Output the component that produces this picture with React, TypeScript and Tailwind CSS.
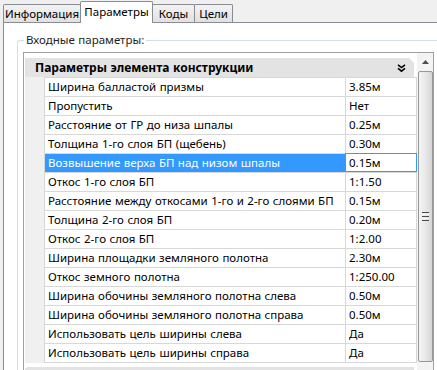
import React from "react";

const ROWS: [string, string][] = [
  ["Ширина балластой призмы", "3.85м"],
  ["Пропустить", "Нет"],
  ["Расстояние от ГР до низа шпалы", "0.25м"],
  ["Толщина 1-го слоя БП (щебень)", "0.30м"],
  ["Возвышение верха БП над низом шпалы", "0.15м"],
  ["Откос 1-го слоя БП", "1:1.50"],
  ["Расстояние между откосами 1-го и 2-го слоями БП", "0.15м"],
  ["Толщина 2-го слоя БП", "0.20м"],
  ["Откос 2-го слоя БП", "1:2.00"],
  ["Ширина площадки земляного полотна", "2.30м"],
  ["Откос земного полотна", "1:250.00"],
  ["Ширина обочины земляного полотна слева", "0.50м"],
  ["Ширина обочины земляного полотна справа", "0.50м"],
  ["Использовать цель ширины слева", "Да"],
  ["Использовать цель ширины справа", "Да"],
];

const SELECTED = 4;

const Tab: React.FC<{ label: string; width: string; active?: boolean; first?: boolean }> = ({ label, width, active, first }) => (
  <div
    className={`${width} ${first ? "" : "-ml-px"} flex items-center justify-center border border-b-0 border-[#898c95] rounded-t-[2px] ${
      active ? "relative z-10 h-[22px] -mb-px bg-white pb-[2px]" : "h-[18px] bg-gradient-to-b from-[#f3f3f3] to-[#e1e1e1]"
    }`}
  >
    {label}
  </div>
);

const Chevrons = () => (
  <svg width="9" height="8" viewBox="0 0 9 8" fill="none" stroke="#000" strokeWidth="1.6">
    <path d="M1 0.8 L4.5 3.6 L8 0.8" />
    <path d="M1 4.4 L4.5 7.2 L8 4.4" />
  </svg>
);

export default function App() {
  return (
    <div className="w-[437px] h-[370px] overflow-hidden bg-[#f0f0f0] text-[11.5px] leading-[14px] [word-spacing:0.5px] text-black font-['Noto_Sans',Arial,sans-serif]">
      <div className="flex items-end h-[22px] pl-[3px]">
        <Tab label="Информация" width="w-[78px]" first />
        <Tab label="Параметры" width="w-[73px]" active />
        <Tab label="Коды" width="w-[43px]" />
        <Tab label="Цели" width="w-[39px]" />
      </div>

      <div className="ml-[3px] h-full border-t border-l border-[#898c95] bg-white pt-[10px]">
        <fieldset className="ml-[13px] w-[440px] h-full border-t border-l border-[#d5dfe5] rounded-tl-[3px]">
          <legend className="ml-[6px] px-[2px] text-[#1e1e1e]">Входные параметры:</legend>

          <div className="ml-[5px] mt-[5px] w-[411px] h-full flex border border-[#a0a0a0] bg-white">
            <div className="flex-1 pt-[5px] pl-px">
              <div className="h-[19px] mr-[3px] flex items-center justify-between pl-[10px] pr-[8px] bg-[#e3e3e3] text-[12px] font-bold [clip-path:polygon(0_0,calc(100%-5px)_0,100%_5px,100%_100%,0_100%)]">
                <span>Параметры элемента конструкции</span>
                <Chevrons />
              </div>

              <div className="bg-[#f0f0f0]">
                {ROWS.map(([label, value], i) => {
                  const sel = i === SELECTED;
                  return (
                    <div key={label} className="flex h-[19px]">
                      <div className="w-[19px]" />
                      <div
                        className={`w-[301px] flex items-center pl-[3px] border-t border-l border-[#d8d8d8] whitespace-nowrap overflow-hidden ${
                          sel ? "bg-[#3399ff] text-white" : "bg-white"
                        }`}
                      >
                        {label}
                      </div>
                      <div
                        className={`w-[72px] flex items-center pl-[3px] border-t border-l border-r bg-white ${
                          sel ? "border-[#3399ff] border-b" : "border-[#d8d8d8]"
                        }`}
                      >
                        {value}
                      </div>
                    </div>
                  );
                })}
                <div className="flex">
                  <div className="w-[19px]" />
                  <div className="w-[373px] border-t border-[#d8d8d8]" />
                </div>
              </div>

              <div className="mt-[4px] mr-[3px] h-[19px] bg-[#e3e3e3] rounded-tl-[3px]" />
            </div>

            <div className="w-[16px] bg-[#f3f3f3] flex flex-col items-center">
              <div className="h-[18px] w-full flex items-center justify-center">
                <svg width="7" height="4" viewBox="0 0 7 4">
                  <path d="M0 4 L3.5 0 L7 4 Z" fill="#4d4d4d" />
                </svg>
              </div>
              <div className="w-[15px] h-[291px] ml-px rounded-[2px] border border-[#979797] bg-gradient-to-r from-[#f4f4f4] via-[#e8e8e8] to-[#d6d6d6] flex items-center justify-center">
                <div className="flex flex-col gap-[1px]">
                  <div className="w-[7px] h-px bg-[#4a4a4a]" />
                  <div className="w-[7px] h-px bg-[#f8f8f8]" />
                  <div className="w-[7px] h-px bg-[#4a4a4a]" />
                  <div className="w-[7px] h-px bg-[#f8f8f8]" />
                  <div className="w-[7px] h-px bg-[#4a4a4a]" />
                </div>
              </div>
            </div>
          </div>
        </fieldset>
      </div>
    </div>
  );
}
